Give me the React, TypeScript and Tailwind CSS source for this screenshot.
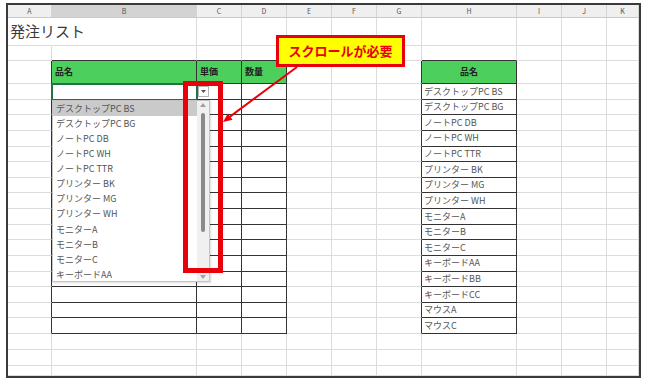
import React from 'react';

const FONT = { fontFamily: '"Noto Sans CJK JP", "Noto Sans", sans-serif' };

const colWidths = ['w-[44px]', 'w-[145px]', 'w-[45px]', 'w-[45px]', 'w-[45px]', 'w-[45px]', 'w-[45px]', 'w-[95px]', 'w-[45px]', 'w-[45px]', 'flex-1'];
const colLetters = ['A', 'B', 'C', 'D', 'E', 'F', 'G', 'H', 'I', 'J', 'K'];

const products = [
  'デスクトップPC BS',
  'デスクトップPC BG',
  'ノートPC DB',
  'ノートPC WH',
  'ノートPC TTR',
  'プリンター BK',
  'プリンター MG',
  'プリンター WH',
  'モニターA',
  'モニターB',
  'モニターC',
  'キーボードAA',
  'キーボードBB',
  'キーボードCC',
  'マウスA',
  'マウスC',
];

// row 0 title, 1 blank, 2 table header, 3..18 data, 19..21 trailing
const rowHeights = [
  'h-[28px]', 'h-[15px]', 'h-[23px]',
  ...Array(16).fill('h-[15.625px]'),
  'h-[16px]', 'h-[16px]', 'flex-1',
];

const inTable = (r: number) => r >= 2 && r <= 18;

function rightColor(r: number, c: number) {
  if (r === 0 && c === 0) return 'border-r-transparent';
  if (inTable(r) && (c === 0 || c === 1 || c === 2 || c === 3 || c === 6 || c === 7)) return 'border-r-[#333]';
  return 'border-r-[#dcdcdc]';
}

function bottomColor(r: number, c: number) {
  const tableCol = c === 1 || c === 2 || c === 3 || c === 7;
  if (tableCol && r >= 1 && r <= 18) return 'border-b-[#333]';
  return 'border-b-[#dcdcdc]';
}

function CellContent({ r, c }: { r: number; c: number }) {
  if (r === 0 && c === 0) {
    return <span className="relative z-10 pl-[2px] text-[15px] text-[#3a3a3a] whitespace-nowrap">発注リスト</span>;
  }
  if (r === 2 && c >= 1 && c <= 3) {
    const label = c === 1 ? '品名' : c === 2 ? '単価' : '数量';
    return <span className="pl-[3px] text-[9px] font-bold text-[#222]">{label}</span>;
  }
  if (r === 2 && c === 7) {
    return <span className="w-full text-center text-[9px] font-bold text-[#222]">品名</span>;
  }
  if (c === 7 && r >= 3 && r <= 18) {
    return <span className="pl-[2px] text-[9px] text-[#555] whitespace-nowrap">{products[r - 3]}</span>;
  }
  if (r === 3 && c === 2) {
    return (
      <div className="ml-[1px] w-[11px] h-[11px] border border-[#b5b5b5] bg-white flex items-center justify-center">
        <svg width="5" height="3" viewBox="0 0 5 3"><path d="M0 0H5L2.5 3Z" fill="#555" /></svg>
      </div>
    );
  }
  return null;
}

function Cell({ r, c }: { r: number; c: number }) {
  const green = r === 2 && ((c >= 1 && c <= 3) || c === 7) ? 'bg-[#4ccf5c]' : '';
  const selected = r === 3 && c === 1 ? 'outline-2 outline-[#217346] -outline-offset-1' : '';
  return (
    <div className={`${colWidths[c]} h-full shrink-0 flex items-center border-r border-b ${rightColor(r, c)} ${bottomColor(r, c)} ${green} ${selected} ${r === 0 ? 'overflow-visible' : 'overflow-hidden'}`}>
      <CellContent r={r} c={c} />
    </div>
  );
}

function DropdownList() {
  return (
    <div className="absolute left-[52px] top-[100px] w-[158px] h-[182px] bg-white border border-[#c4c4c4] shadow-[1px_1px_2px_rgba(0,0,0,0.15)] flex">
      <div className="flex-1 flex flex-col">
        {products.slice(0, 12).map((p, i) => (
          <div key={p} className={`h-[15.1px] shrink-0 flex items-center pl-[3px] text-[9px] text-[#555] whitespace-nowrap ${i === 0 ? 'bg-[#cacaca]' : ''}`}>
            {p}
          </div>
        ))}
      </div>
      <div className="w-[12px] bg-[#f0f0f0] flex flex-col items-center">
        <svg className="mt-[2px]" width="6" height="4" viewBox="0 0 6 4"><path d="M0 4H6L3 0Z" fill="#a0a0a0" /></svg>
        <div className="mt-[6px] w-[4px] h-[119px] rounded-full bg-[#8a8a8a]" />
        <div className="flex-1" />
        <svg className="mb-[2px]" width="6" height="4" viewBox="0 0 6 4"><path d="M0 0H6L3 4Z" fill="#a0a0a0" /></svg>
      </div>
    </div>
  );
}

export default function App() {
  return (
    <div className="relative w-[650px] h-[384px] bg-white" style={FONT}>
      <div className="absolute left-[6px] top-[3px] w-[635px] h-[375px] bg-white border-2 border-[#3a3a3a] overflow-hidden flex flex-col">
        {/* column headers */}
        <div className="h-[13px] shrink-0 flex">
          {colLetters.map((l, c) => (
            <div
              key={l}
              className={`${colWidths[c]} h-full shrink-0 flex items-center justify-center border-r border-b border-r-[#d4d4d4] border-b-[#c8c8c8] text-[7px] text-[#555] ${c === 1 ? 'bg-[#d3d3d3]' : 'bg-[#efefef]'}`}
            >
              {l}
            </div>
          ))}
        </div>
        {rowHeights.map((h, r) => (
          <div key={r} className={`${h} shrink-0 flex`}>
            {colLetters.map((l, c) => (
              <Cell key={l} r={r} c={c} />
            ))}
          </div>
        ))}
      </div>

      <DropdownList />

      {/* red highlight around scrollbar */}
      <div className="absolute left-[183px] top-[81px] w-[40px] h-[192px] border-[5px] border-[#e8000b]" />

      {/* callout */}
      <div className="absolute left-[276px] top-[35px] w-[129px] h-[32px] bg-[#ffff00] border-[3px] border-[#e8000b] flex items-center justify-center text-[13px] font-bold text-[#e8000b]">
        スクロールが必要
      </div>

      <svg className="absolute left-0 top-0 pointer-events-none" width="650" height="384" viewBox="0 0 650 384">
        <line x1="297" y1="67" x2="230" y2="116.6" stroke="#e8000b" strokeWidth="2" />
        <polygon points="223,122 232.6,119.8 227.8,113.4" fill="#e8000b" />
      </svg>
    </div>
  );
}
